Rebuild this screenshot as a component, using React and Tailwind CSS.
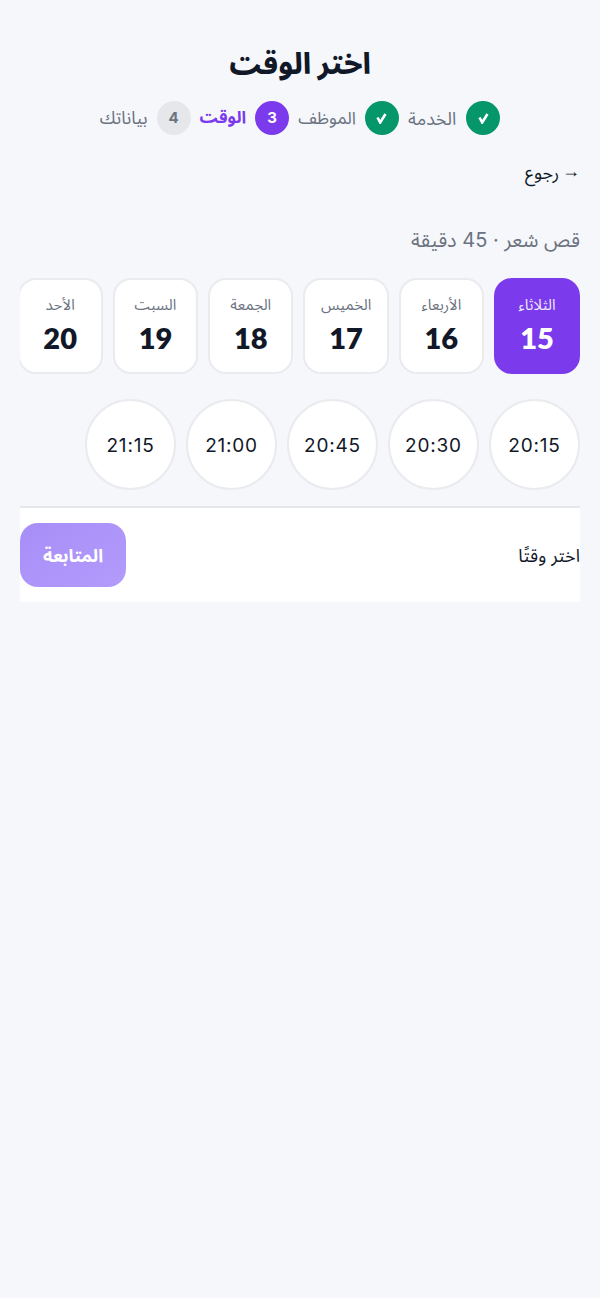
const steps = [
  { n: "✓", label: "الخدمة", done: true, size: "text-[18px] mr-[1px] text-[#6b7280]" },
  { n: "✓", label: "الموظف", done: true, size: "text-[17.4px] text-[#6b7280]" },
  { n: "3", label: "الوقت", active: true, size: "text-[17px] font-bold text-[#7c3aed]" },
  { n: "4", label: "بياناتك", size: "text-[17.6px] text-[#6b7280]" },
];
const days = [
  { name: "الثلاثاء", num: "15", active: true },
  { name: "الأربعاء", num: "16" },
  { name: "الخميس", num: "17" },
  { name: "الجمعة", num: "18" },
  { name: "السبت", num: "19" },
  { name: "الأحد", num: "20" },
];
const times = ["20:15", "20:30", "20:45", "21:00", "21:15"];

function Step({ step }) {
  let circle = "bg-[#e5e7eb] text-[#6b7280]";
  if (step.done) circle = "bg-[#059669] text-white";
  if (step.active) circle = "bg-[#7c3aed] text-white";
  return (
    <>
      <div className={"w-[34px] h-[34px] rounded-full flex items-center justify-center text-[15px] font-bold " + circle}>
        {step.done ? (
          <svg width="11" height="11" viewBox="0 0 11 11" fill="none" stroke="currentColor" strokeWidth="2.6">
            <path d="M1.5 4.5 L4.2 9.5 L9.5 1" />
          </svg>
        ) : (
          step.n
        )}
      </div>
      <span className={step.size}>{step.label}</span>
    </>
  );
}

export default function App() {
  return (
    <div dir="rtl" className="min-h-[1298px] bg-[#f5f7fb] font-['Inter','Noto_Sans_Arabic','DejaVu_Sans',sans-serif]">
      <div className="px-5">
        <div className="pt-[41px] pb-4 text-center">
          <h1 className="text-[29.2px] leading-[46px] font-extrabold text-[#111827]">اختر الوقت</h1>
          <div className="flex items-center justify-center gap-[9px] mt-[14px]">
            {steps.map((s) => (
              <Step key={s.label} step={s} />
            ))}
          </div>
        </div>
        <div className="flex items-center gap-[3px] text-[18px] leading-[28px] text-[#111827] mt-[6px]">
          <span className="font-['Liberation_Sans'] mb-[4px]">→</span>
          <span>رجوع</span>
        </div>
        <div className="text-[20px] leading-[30px] text-[#6b7280] mt-[36px]">قص شعر · 45 دقيقة</div>
        <div className="flex gap-[10px] mt-[23px] overflow-hidden">
          {days.map((d) => (
            <div
              key={d.num}
              className={
                "shrink-0 h-[96px] rounded-[18px] flex flex-col items-center justify-center " +
                (d.active ? "w-[86px] bg-[#7c3aed] text-white" : "w-[85.3px] bg-white border-2 border-[#e9ebef] text-[#111827]")
              }
            >
              <span className={"text-[15px] leading-[24px] " + (d.active ? "text-[#ede9fe]" : "text-[#6b7280]")}>{d.name}</span>
              <span className="text-[29px] leading-[42px] font-extrabold font-['Lato']">{d.num}</span>
            </div>
          ))}
        </div>
        <div className="flex gap-[10px] mt-[25px]">
          {times.map((t) => (
            <div key={t} className="w-[91px] h-[91px] rounded-full bg-white border-2 border-[#e9ebef] flex items-center justify-center pt-[3px] text-[19px] tracking-[0.8px] text-[#111827]">
              {t}
            </div>
          ))}
        </div>
        <div className="mt-4 bg-white border-t-2 border-[#e5e7eb] py-[15px] flex items-center justify-between">
          <span className="text-[18px] text-[#111827]">اختر وقتًا</span>
          <button className="w-[106px] h-[64px] rounded-[18px] bg-linear-to-br from-[#a78ef8] to-[#b39bfb] text-white font-bold text-[18px]">المتابعة</button>
        </div>
      </div>
    </div>
  );
}
